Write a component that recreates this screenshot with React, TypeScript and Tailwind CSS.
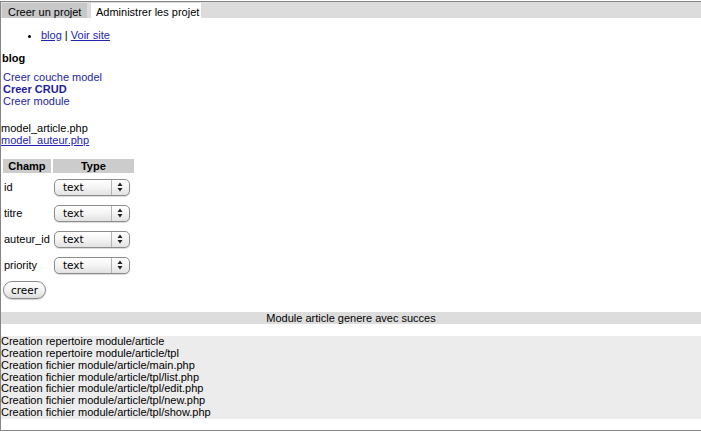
import React from "react";

const fields = ["id", "titre", "auteur_id", "priority"];

const logLines = [
  "Creation repertoire module/article",
  "Creation repertoire module/article/tpl",
  "Creation fichier module/article/main.php",
  "Creation fichier module/article/tpl/list.php",
  "Creation fichier module/article/tpl/edit.php",
  "Creation fichier module/article/tpl/new.php",
  "Creation fichier module/article/tpl/show.php",
];

function FakeSelect() {
  return (
    <div className="flex h-[17px] w-[76px] items-center rounded-[5px] border border-[#8c8c8c] bg-gradient-to-b from-white via-[#f4f4f4] to-[#e2e2e2] shadow-[0_1px_1px_rgba(0,0,0,0.15)]">
      <span className="flex-1 pl-[8px] font-['DejaVu_Sans',sans-serif] text-[10.5px] leading-[15px] text-black">text</span>
      <div className="flex h-full w-[18px] items-center justify-center border-l border-[#b5b5b5]">
        <svg width="6" height="10" viewBox="0 0 6 10">
          <path d="M3 0.5 L5.5 4 L0.5 4 Z" fill="#222" />
          <path d="M3 9.5 L5.5 6 L0.5 6 Z" fill="#222" />
        </svg>
      </div>
    </div>
  );
}

export default function App() {
  return (
    <div className="h-[436px] w-[701px] overflow-hidden bg-white pt-[1px] font-['Liberation_Sans',Arial,sans-serif] text-[11px] text-black">
      <div className="border-b border-l border-t border-[#858585] pb-[11px]">
        {/* tabs */}
        <div className="flex h-[16px] items-end bg-[#dcdcdc]">
          <div className="ml-[1px] h-[15px] w-[85px] bg-[#c8c8c8] pl-[6px] pt-[3px] leading-[12px]">Creer un projet</div>
          <div className="ml-[4px] h-[15px] w-[110px] bg-white pl-[5px] pt-[3px] leading-[12px]">Administrer les projet</div>
        </div>

        <ul className="mt-[11px] list-disc pl-[40px] leading-[13px]">
          <li>
            <a href="#" className="text-[#2323b4] underline">blog</a> | <a href="#" className="text-[#2323b4] underline">Voir site</a>
          </li>
        </ul>

        <h3 className="mt-[10px] pl-[1px] font-bold leading-[13px]">blog</h3>

        <div className="mt-[6px] flex flex-col pl-[2px] leading-[12px] text-[#1e1ea0]">
          <a href="#">Creer couche model</a>
          <a href="#" className="font-bold">Creer CRUD</a>
          <a href="#">Creer module</a>
        </div>

        <div className="mt-[15px] flex flex-col leading-[12px]">
          <span>model_article.php</span>
          <a href="#" className="text-[#2323b4] underline">model_auteur.php</a>
        </div>

        <table className="mt-[11px] border-separate border-spacing-[2px]">
          <thead>
            <tr>
              <th className="h-[14px] w-[47px] bg-[#cccccc] p-0 text-center font-bold leading-[14px]">Champ</th>
              <th className="h-[14px] w-[81px] bg-[#cccccc] p-0 text-center font-bold leading-[14px]">Type</th>
            </tr>
          </thead>
          <tbody>
            {fields.map((f) => (
              <tr key={f}>
                <td className="h-[24px] px-[1px] py-0 align-middle">{f}</td>
                <td className="h-[24px] p-0 pl-[1px] align-middle">
                  <FakeSelect />
                </td>
              </tr>
            ))}
          </tbody>
        </table>

        <button className="ml-[2px] mt-[2px] flex h-[18px] w-[43px] items-center justify-center rounded-full border border-[#8a8a8a] bg-gradient-to-b from-white via-[#f3f3f3] to-[#dedede] font-['DejaVu_Sans',sans-serif] text-[10.5px] leading-[14px] shadow-[0_1px_1px_rgba(0,0,0,0.2)]">
          creer
        </button>

        <div className="mt-[13px] h-[12px] bg-[#dddddd] text-center leading-[12px]">Module article genere avec succes</div>

        <div className="mt-[12px] bg-[#ececec]">
          {logLines.map((l) => (
            <div key={l} className="leading-[11.85px]">{l}</div>
          ))}
        </div>
      </div>
    </div>
  );
}
